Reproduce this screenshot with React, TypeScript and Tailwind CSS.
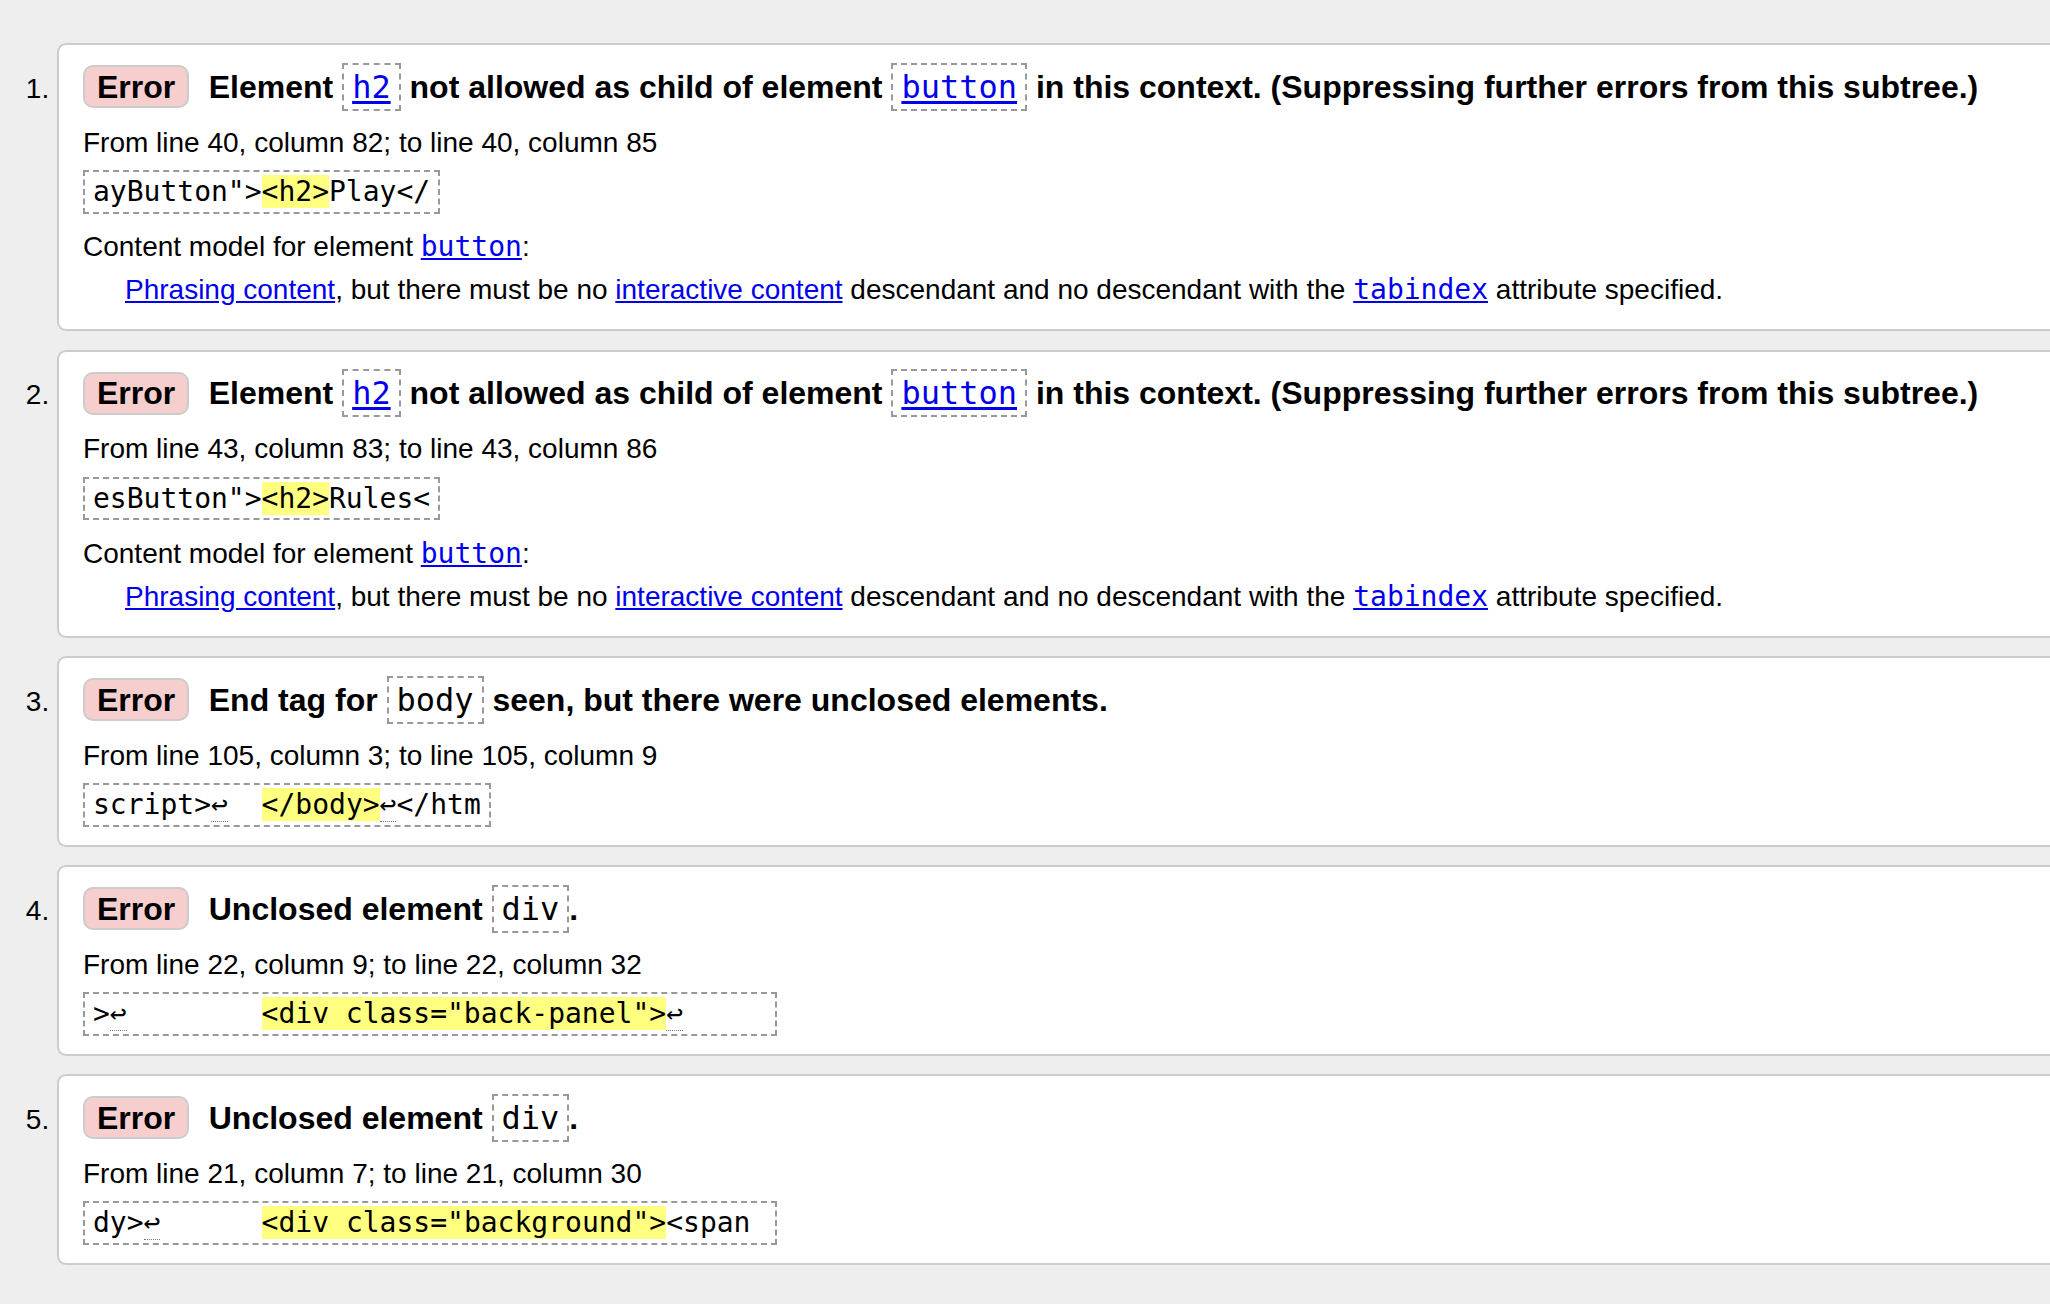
import React from 'react';

type Message = {
  title: React.ReactNode;
  location: string;
  extract: React.ReactNode;
  contentModel?: boolean;
};

const mono = "font-['DejaVu_Sans_Mono','Liberation_Mono',monospace]";

const Tag = ({ children, link }: { children: string; link?: boolean }) => (
  <code className={`${mono} inline-block border-2 border-dashed border-[#999] px-[8px] text-[32px] font-normal leading-[44.3px]`}>
    {link ? (
      <a href="#" className="text-[#0000ee] underline underline-offset-[3px]">
        {children}
      </a>
    ) : (
      children
    )}
  </code>
);

const Hl = ({ children }: { children: string }) => (
  <mark className="bg-[#ffff80] text-black">{children}</mark>
);

// line feed marker in the source extract
const Lf = () => <span className="border-b border-dotted border-[#777]">↩</span>;

const Link = ({ children, code }: { children: string; code?: boolean }) => (
  <a href="#" className={`text-[#0000ee] underline ${code ? mono : ''}`}>
    {children}
  </a>
);

const messages: Message[] = [
  {
    title: (
      <>
        Element <Tag link>h2</Tag> not allowed as child of element <Tag link>button</Tag> in this context.
        (Suppressing further errors from this subtree.)
      </>
    ),
    location: 'From line 40, column 82; to line 40, column 85',
    extract: (
      <>
        ayButton"&gt;<Hl>{'<h2>'}</Hl>Play&lt;/
      </>
    ),
    contentModel: true,
  },
  {
    title: (
      <>
        Element <Tag link>h2</Tag> not allowed as child of element <Tag link>button</Tag> in this context.
        (Suppressing further errors from this subtree.)
      </>
    ),
    location: 'From line 43, column 83; to line 43, column 86',
    extract: (
      <>
        esButton"&gt;<Hl>{'<h2>'}</Hl>Rules&lt;
      </>
    ),
    contentModel: true,
  },
  {
    title: (
      <>
        End tag for <Tag>body</Tag> seen, but there were unclosed elements.
      </>
    ),
    location: 'From line 105, column 3; to line 105, column 9',
    extract: (
      <>
        script&gt;<Lf />{'  '}<Hl>{'</body>'}</Hl><Lf />&lt;/htm
      </>
    ),
  },
  {
    title: (
      <>
        Unclosed element <Tag>div</Tag>.
      </>
    ),
    location: 'From line 22, column 9; to line 22, column 32',
    extract: (
      <>
        &gt;<Lf />{'        '}<Hl>{'<div class="back-panel">'}</Hl><Lf />{'     '}
      </>
    ),
  },
  {
    title: (
      <>
        Unclosed element <Tag>div</Tag>.
      </>
    ),
    location: 'From line 21, column 7; to line 21, column 30',
    extract: (
      <>
        dy&gt;<Lf />{'      '}<Hl>{'<div class="background">'}</Hl>{'<span '}
      </>
    ),
  },
];

const MessageItem = ({ msg }: { msg: Message }) => (
  <li className="mb-[18.5px] rounded-l-[9px] border-2 border-r-0 border-[#cccccc] bg-white pb-[18px] pl-[24px] pt-[17.4px] marker:text-[28px] marker:text-black">
    <p className="flex items-baseline whitespace-nowrap">
      <strong className="mr-[19.5px] inline-flex h-[43px] items-center rounded-[10px] border-2 border-[#cccccc] bg-[#f6cece] px-[12px] text-[32px] font-bold">
        Error
      </strong>
      <span className="text-[32px] font-bold leading-[48px]">{msg.title}</span>
    </p>
    <p className="mt-[10px] text-[28px] leading-[43px]">{msg.location}</p>
    <p className="mt-[6.5px] flex">
      <code className={`${mono} whitespace-pre border-2 border-dashed border-[#999] px-[8px] text-[28px] leading-[39.3px]`}>
        {msg.extract}
      </code>
    </p>
    {msg.contentModel && (
      <dl className="mt-[11.5px] text-[28px] leading-[43px]">
        <dt>
          Content model for element <Link code>button</Link>:
        </dt>
        <dd className="pl-[42px]">
          <Link>Phrasing content</Link>, but there must be no <Link>interactive content</Link> descendant and no
          descendant with the <Link code>tabindex</Link> attribute specified.
        </dd>
      </dl>
    )}
  </li>
);

const App: React.FC = () => {
  return (
    <div className="min-h-screen w-full overflow-hidden bg-[#eeeeee] font-['Liberation_Sans',Arial,sans-serif] text-black">
      <ol className="w-[2140px] list-outside list-decimal pl-[57px] pt-[43.3px] text-[28px]">
        {messages.map((m, i) => (
          <MessageItem key={i} msg={m} />
        ))}
      </ol>
    </div>
  );
};

export default App;
